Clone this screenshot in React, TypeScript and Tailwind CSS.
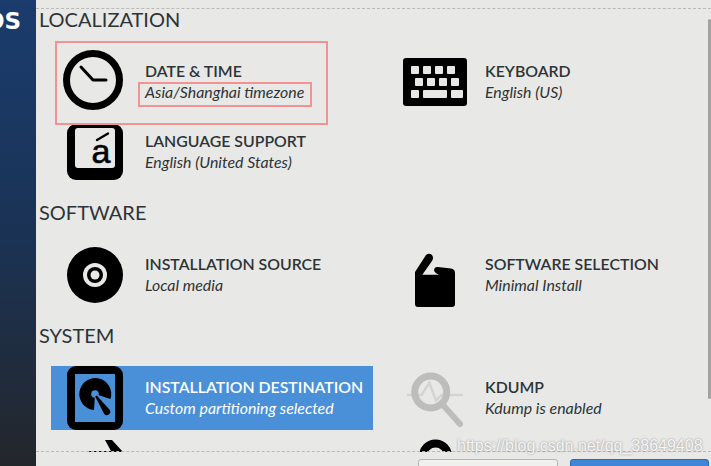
import React from 'react';

const ClockIcon = () => (
  <svg viewBox="0 0 60 60" className="w-[60px] h-[60px] shrink-0 -translate-x-[2px] -translate-y-[2px]">
    <circle cx="30" cy="30" r="26.5" fill="none" stroke="#000" strokeWidth="7" />
    <path d="M18 17 L30 30 L43 30" fill="none" stroke="#000" strokeWidth="3" strokeLinecap="round" strokeLinejoin="round" />
  </svg>
);

const LanguageIcon = () => (
  <svg viewBox="0 0 56 56" className="w-14 h-14 shrink-0">
    <rect width="56" height="56" rx="9" fill="#000" />
    <path d="M8 7 a3 3 0 0 1 3 -3 H45 a3 3 0 0 1 3 3 V41 a3 3 0 0 1 -3 3 H11 a3 3 0 0 1 -3 -3 Z" fill="#e8e8e7" />
    <path d="M30 16 L41 9.5" stroke="#000" strokeWidth="2.4" strokeLinecap="round" />
    <text x="34" y="39" textAnchor="middle" fontFamily="'Liberation Sans', sans-serif" fontSize="34" stroke="#000" strokeWidth="0.6" fill="#000">a</text>
  </svg>
);

const KeyboardIcon = () => (
  <svg viewBox="0 0 64 48" className="w-16 h-12 shrink-0">
    <rect width="64" height="48" rx="3" fill="#000" />
    <g fill="#e8e8e7">
      <rect x="8" y="8" width="8" height="8" rx="1" />
      <rect x="20" y="8" width="8" height="8" rx="1" />
      <rect x="32" y="8" width="8" height="8" rx="1" />
      <rect x="44" y="8" width="8" height="8" rx="1" />
      <rect x="12" y="20" width="8" height="8" rx="1" />
      <rect x="24" y="20" width="8" height="8" rx="1" />
      <rect x="36" y="20" width="8" height="8" rx="1" />
      <rect x="48" y="20" width="8" height="8" rx="1" />
      <rect x="8" y="32" width="8" height="8" rx="1" />
      <rect x="20" y="32" width="24" height="8" rx="1" />
      <rect x="48" y="32" width="12" height="8" rx="1" />
    </g>
  </svg>
);

const DiscIcon = () => (
  <svg viewBox="0 0 56 56" className="w-14 h-14 shrink-0">
    <circle cx="28" cy="28" r="28" fill="#000" />
    <circle cx="28" cy="28" r="12" fill="#e8e8e7" />
    <circle cx="28" cy="28" r="8" fill="#000" />
    <circle cx="28" cy="28" r="4.5" fill="#e8e8e7" />
  </svg>
);

const PackageIcon = () => (
  <svg viewBox="0 0 56 64" className="w-14 h-16 shrink-0">
    <path
      d="M19 12 Q22 9.5 25 12 Q27 15 25 18 L15.3 31.7 H32 Q27.5 30 27 27 Q27.5 23.5 31 24 L44 25.5 Q48 26 48 30 V61 Q48 64 45 64 H11 Q8 64 8 61 V29 Z"
      fill="#000"
    />
  </svg>
);

const DiskIcon = () => (
  <svg viewBox="0 0 56 64" className="w-14 h-16 shrink-0">
    <rect width="56" height="64" rx="9" fill="#000" />
    <rect x="8" y="8" width="40" height="48" fill="#4a90d9" />
    <path d="M28 28 L43.5 33 A16 16 0 1 0 27 44 Z" fill="#000" />
    <circle cx="28" cy="28" r="3.8" fill="#4a90d9" />
    <path d="M29.8 29.4 L42.8 44.1 A3.4 3.4 0 0 1 37.2 47.9 L28.2 30.6 Z" fill="#000" />
  </svg>
);

const KdumpIcon = () => (
  <svg viewBox="0 0 56 64" className="w-14 h-16 shrink-0">
    <path d="M0 29 H14.7 L22.3 16.7 L29 34.3 L34.7 29 H56" fill="none" stroke="#d4d4d3" strokeWidth="2.5" />
    <circle cx="23.7" cy="26" r="16" fill="none" stroke="#bdbdbc" strokeWidth="7" />
    <path d="M36 39 L53 58" stroke="#bdbdbc" strokeWidth="6" strokeLinecap="round" />
  </svg>
);

const NetworkIcon = () => (
  <svg viewBox="0 0 56 64" className="w-14 h-16 shrink-0">
    <path d="M38 4 L45 4 L56 16 H22 V15 H44 Z" fill="#000" />
  </svg>
);

const LockIcon = () => (
  <svg viewBox="0 0 56 64" className="w-14 h-16 shrink-0">
    <path d="M16 40 V20 a12.5 12.5 0 0 1 25 0 V40" fill="none" stroke="#000" strokeWidth="8" />
  </svg>
);

type SpokeProps = {
  icon: React.ReactNode;
  title: string;
  status: string;
  selected?: boolean;
};

const Spoke = ({ icon, title, status, selected }: SpokeProps) => (
  <div className={`flex items-center h-16 pl-4 ${selected ? 'bg-[#4a90d9]' : ''}`}>
    <div className="w-14 h-16 flex items-center justify-center shrink-0">{icon}</div>
    <div className="ml-[22px] pb-px">
      <div className={`text-[15.85px] leading-[17px] mb-[3px] font-semibold whitespace-nowrap ${selected ? 'text-white' : 'text-[#2e3436]'}`}>{title}</div>
      <div className={`text-[15.9px] leading-5 italic whitespace-nowrap ${selected ? 'text-white' : 'text-[#2e3436]'}`}>{status}</div>
    </div>
  </div>
);

const Heading = ({ children, className }: { children: React.ReactNode; className: string }) => (
  <h2 className={`pl-[3px] text-[20px] leading-6 text-[#2e3436] ${className}`}>{children}</h2>
);

export default function App() {
  return (
    <div className="relative flex w-[711px] h-[466px] overflow-hidden bg-[#e8e8e7] font-['Lato','Noto_Sans',sans-serif]">
      <aside className="w-9 shrink-0 overflow-hidden bg-gradient-to-b from-[#1a3c6e] via-[#1a3355] to-[#23262b]">
        <div className="mt-[7px] -ml-[15px] text-[23px] leading-7 font-bold text-white font-['DejaVu_Sans',sans-serif]">OS</div>
      </aside>

      <main className="flex-1 flex flex-col min-w-0">
        <div className="mt-2 h-[444px] shrink-0 border-t border-dashed border-[#b9b9b8] overflow-hidden">
          <Heading className="-mt-[2px]">LOCALIZATION</Heading>
          <div className="grid grid-cols-[322px_300px] gap-x-[18px] gap-y-[6px] ml-[15px] mt-[19px]">
            <Spoke icon={<ClockIcon />} title="DATE & TIME" status="Asia/Shanghai timezone" />
            <Spoke icon={<KeyboardIcon />} title="KEYBOARD" status="English (US)" />
            <Spoke icon={<LanguageIcon />} title="LANGUAGE SUPPORT" status="English (United States)" />
          </div>
          <Heading className="mt-[16px]">SOFTWARE</Heading>
          <div className="grid grid-cols-[322px_300px] gap-x-[18px] ml-[15px] mt-[19px]">
            <Spoke icon={<DiscIcon />} title="INSTALLATION SOURCE" status="Local media" />
            <Spoke icon={<PackageIcon />} title="SOFTWARE SELECTION" status="Minimal Install" />
          </div>
          <Heading className="mt-[16px]">SYSTEM</Heading>
          <div className="grid grid-cols-[322px_300px] gap-x-[18px] gap-y-[6px] ml-[15px] mt-[19px]">
            <Spoke icon={<DiskIcon />} title="INSTALLATION DESTINATION" status="Custom partitioning selected" selected />
            <Spoke icon={<KdumpIcon />} title="KDUMP" status="Kdump is enabled" />
            <Spoke icon={<NetworkIcon />} title="NETWORK & HOST NAME" status="Not connected" />
            <Spoke icon={<LockIcon />} title="SECURITY POLICY" status="No profile selected" />
          </div>
        </div>
        <div className="flex justify-end gap-3 pr-[2px] mt-[7px]">
          <div className="w-[140px] h-8 rounded-t-[3px] border border-[#b5b5b4] bg-[#f0f0ef]" />
          <div className="w-[139px] h-8 rounded-t-[3px] border border-[#2a6ab5] bg-[#3f86d8]" />
        </div>
      </main>

      <div className="absolute left-9 right-0 top-[451px] border-t border-dashed border-[#b9b9b8]" />
      <div className="absolute right-0 top-[19px] w-[3px] h-[380px] rounded-sm bg-[#a3a3a2]" />
      <div className="absolute left-[55px] top-[41px] w-[273px] h-[84px] border-2 border-[#f29292]" />
      <div className="absolute left-[138px] top-[82px] w-[174px] h-[25px] border-2 border-[#f29292]" />
      <div className="absolute left-[457px] top-[436px] text-[16px] leading-5 text-[#f6f6f6] [text-shadow:0_0_2px_rgba(0,0,0,0.45)] font-['Liberation_Sans',sans-serif] whitespace-nowrap">
        https://blog.csdn.net/qq_38649408
      </div>
    </div>
  );
}
